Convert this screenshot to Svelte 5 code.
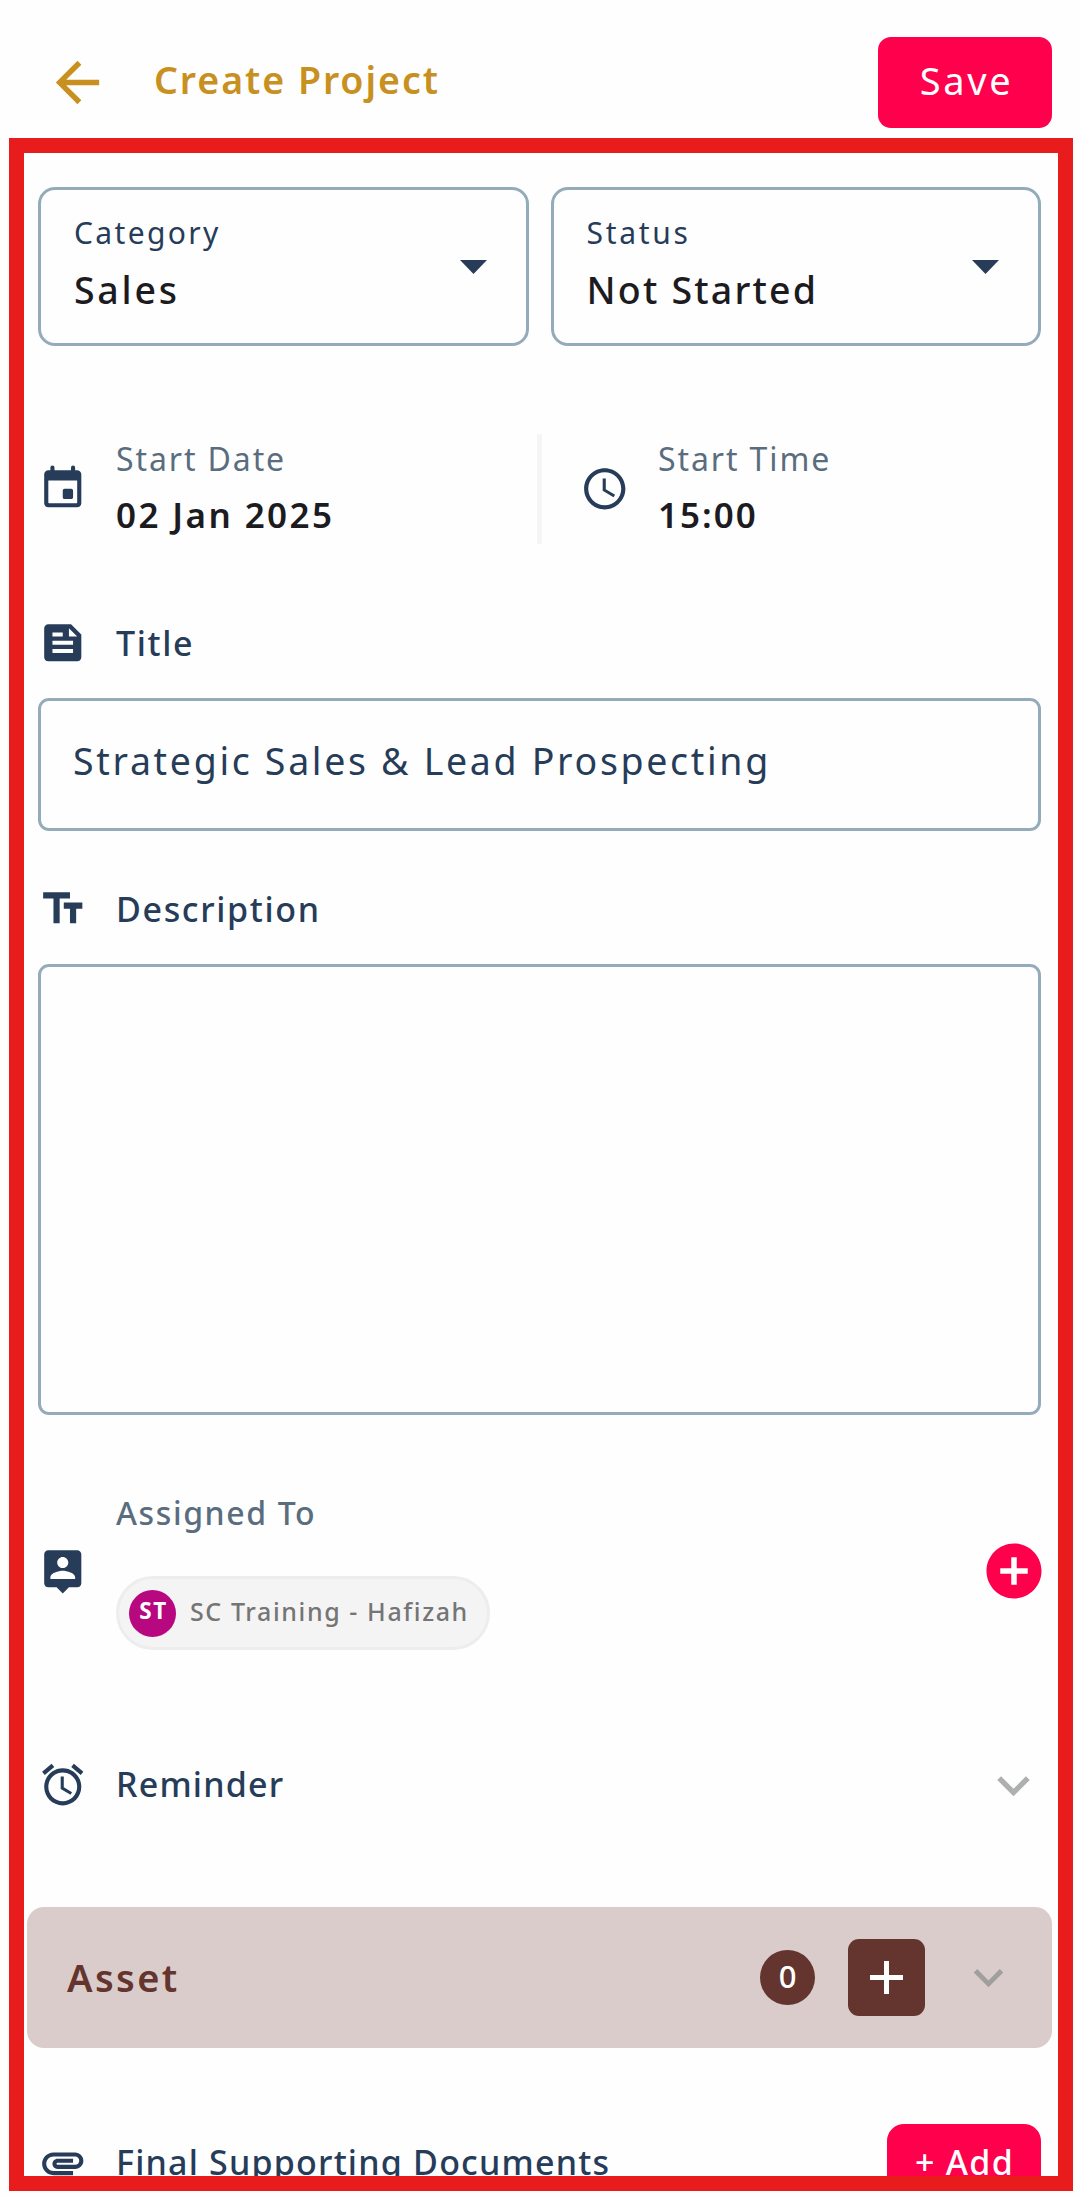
<script>
  const paths = {
    back: 'M20 11H7.83l5.59-5.59L12 4l-8 8 8 8 1.41-1.41L7.83 13H20z',
    event: 'M18.9 3H18V1.7a.9.9 0 0 0-2 0V3H8V1.7a.9.9 0 0 0-2 0V3h-.9C3.9 3 3 3.9 3 5v14c0 1.1.9 2 2.1 2h13.8c1.2 0 2.1-.9 2.1-2V5c0-1.1-.9-2-2.1-2zM19 18.5c0 .3-.2.5-.5.5h-13c-.3 0-.5-.2-.5-.5V8h14zM12.9 12h3.2c.5 0 .9.4.9.9v3.2c0 .5-.4.9-.9.9h-3.2a.9.9 0 0 1-.9-.9v-3.2c0-.5.4-.9.9-.9z',
    clock: 'M11.99 2C6.47 2 2 6.48 2 12s4.47 10 9.99 10C17.52 22 22 17.52 22 12S17.52 2 11.99 2zM12 20c-4.42 0-8-3.58-8-8s3.58-8 8-8 8 3.58 8 8-3.58 8-8 8zM12.5 7H11v6l5.25 3.15.75-1.23-4.5-2.67z',
    feed: 'M16 3H5c-1.1 0-2 .9-2 2v14c0 1.1.9 2 2 2h14c1.1 0 2-.9 2-2V8zM7 7h5v2H7zM17 17H7v-2h10zM17 13H7v-2h10zM15 9V5l4 4z',
    letters: 'M2.5 4v3h5v12h3V7h5V4zM21.5 9h-9v3h3v7h3v-7h3z',
    person: 'M19 2H5c-1.11 0-2 .9-2 2v14c0 1.1.89 2 2 2h4l3 3 3-3h4c1.1 0 2-.9 2-2V4c0-1.1-.9-2-2-2zM12 5.3c1.49 0 2.7 1.21 2.7 2.7s-1.21 2.7-2.7 2.7S9.3 9.49 9.3 8s1.21-2.7 2.7-2.7zM18 16H6v-.9c0-2 4-3.1 6-3.1s6 1.1 6 3.1z',
    alarm: 'M22 5.72l-4.6-3.86-1.29 1.53 4.6 3.86zM7.88 3.39L6.6 1.86 2 5.71l1.29 1.53zM12.5 8H11v6l4.75 2.85.75-1.23-4-2.37zM12 4c-4.97 0-9 4.03-9 9s4.02 9 9 9 9-4.03 9-9-4.03-9-9-9zM12 20c-3.87 0-7-3.13-7-7s3.13-7 7-7 7 3.13 7 7-3.13 7-7 7z',
    clip: 'M2 12.5C2 9.46 4.46 7 7.5 7H18c2.21 0 4 1.79 4 4s-1.79 4-4 4H9.5C8.12 15 7 13.88 7 12.5S8.12 10 9.5 10H17v2H9.41c-.55 0-.55 1 0 1H18c1.1 0 2-.9 2-2s-.9-2-2-2H7.5C5.57 9 4 10.57 4 12.5S5.57 16 7.5 16H17v2H7.5C4.46 18 2 15.54 2 12.5z',
    plusCircle: 'M12 2C6.48 2 2 6.48 2 12s4.48 10 10 10 10-4.48 10-10S17.52 2 12 2zM17 13h-4v4h-2v-4H7v-2h4V7h2v4h4z',
    chevron: 'M16.59 8.59L12 13.17 7.41 8.59 6 10l6 6 6-6z',
  };
  const selects = [
    { label: 'Category', value: 'Sales', kind: 'category' },
    { label: 'Status', value: 'Not Started', kind: 'status' },
  ];
</script>

{#snippet icon(name, kind)}
  <svg class="icon {kind}" viewBox="0 0 24 24" aria-hidden="true"><path fill-rule="evenodd" d={paths[name]} /></svg>
{/snippet}

<div class="screen">
  <header>
    {@render icon('back', 'back')}
    <h1>Create Project</h1>
    <button class="save">Save</button>
  </header>

  <main>
    <section class="selects">
      {#each selects as s}
        <div class="select {s.kind}">
          <div class="select-text">
            <span class="select-label">{s.label}</span>
            <span class="select-value">{s.value}</span>
          </div>
          <svg class="caret" viewBox="0 0 27 14" aria-hidden="true"><path d="M0 0h27L13.5 14z" /></svg>
        </div>
      {/each}
    </section>

    <section class="dates">
      {@render icon('event', 'field')}
      <div class="pair date">
        <span class="muted">Start Date</span>
        <span class="strong">02 Jan 2025</span>
      </div>
      <div class="divider"></div>
      {@render icon('clock', 'field')}
      <div class="pair">
        <span class="muted">Start Time</span>
        <span class="strong time">15:00</span>
      </div>
    </section>

    <div class="heading title">
      {@render icon('feed', 'field')}
      <span>Title</span>
    </div>
    <div class="input">Strategic Sales &amp; Lead Prospecting</div>

    <div class="heading desc">
      {@render icon('letters', 'field')}
      <span>Description</span>
    </div>
    <div class="area"></div>

    <section class="assigned">
      {@render icon('person', 'field')}
      <div class="people">
        <span class="muted assigned-label">Assigned To</span>
        <div class="chip">
          <span class="avatar">ST</span>
          <span class="name">SC Training - Hafizah</span>
        </div>
      </div>
      {@render icon('plusCircle', 'add-person')}
    </section>

    <div class="heading reminder">
      {@render icon('alarm', 'field')}
      <span>Reminder</span>
      {@render icon('chevron', 'expand')}
    </div>

    <section class="asset">
      <span class="asset-name">Asset</span>
      <span class="count">0</span>
      <button class="asset-add" aria-label="Add asset">
        <svg viewBox="0 0 33 33" aria-hidden="true"><path d="M14 0h5v14h14v5H19v14h-5V19H0v-5h14z" /></svg>
      </button>
      {@render icon('chevron', 'asset-expand')}
    </section>

    <div class="heading docs">
      {@render icon('clip', 'field')}
      <span>Final Supporting Documents</span>
      <button class="add">+ Add</button>
    </div>
  </main>
</div>

<style>
  :global(body) { margin: 0; background: #fefefe; }
  .screen {
    box-sizing: border-box;
    width: 1080px;
    height: 2198px;
    overflow: hidden;
    background: #fefefe;
    color: #263c58;
    font-family: "Noto Sans", "Open Sans", sans-serif;
    white-space: nowrap;
  }
  .screen * { box-sizing: border-box; }
  button { border: 0; margin: 0; padding: 0; font-family: inherit; color: #fff; background: #ff004d; }
  .icon { display: block; flex: none; fill: #263c58; }

  header { display: flex; align-items: center; height: 138px; padding: 26px 28px 0 45px; }
  .back { width: 65px; height: 65px; fill: #c8901f; }
  h1 { margin: 0 0 5px 44px; font-size: 37.5px; font-weight: 600; letter-spacing: 1.95px; line-height: 50px; color: #c8901f; }
  .save { width: 174px; height: 91px; margin-left: auto; padding: 0 0 4px 3px; border-radius: 13px; font-size: 38px; letter-spacing: 2.7px; }

  main {
    width: 1064px;
    height: 2053px;
    margin-left: 9px;
    padding: 34px 17px 0 14px;
    border: 15px solid #e81c1c;
    overflow: hidden;
  }

  .selects { display: grid; grid-template-columns: 1fr 1fr; gap: 22px; height: 159px; }
  .select { display: flex; justify-content: space-between; border: 3px solid #94abba; border-radius: 17px; padding: 0 39px 0 33px; }
  .select-text { display: flex; flex-direction: column; padding-top: 21px; }
  .select-label { font-size: 30px; line-height: 44px; letter-spacing: 2.35px; }
  .select-value { margin-top: 8px; font-size: 37.5px; font-weight: 500; line-height: 54px; letter-spacing: 2.75px; color: #1c1b1f; }
  .status .select-label { letter-spacing: 2.7px; }
  .status .select-value { letter-spacing: 2.2px; }
  .caret { width: 27px; height: 14px; margin-top: 70px; fill: #263c58; }

  .field { width: 49.5px; height: 49.5px; margin-right: 28.5px; }

  .dates { display: flex; align-items: center; height: 110px; margin-top: 88px; }
  .pair { display: flex; flex-direction: column; height: 100%; }
  .date { width: 421px; }
  .muted { font-size: 32px; line-height: 49px; letter-spacing: 1.9px; color: #5a6d7f; }
  .strong { padding-top: 1px; font-size: 35px; font-weight: 600; line-height: 62px; letter-spacing: 2.4px; color: #1c1b1f; }
  .time { letter-spacing: 2px; }
  .divider { width: 5px; height: 100%; margin-right: 38px; background: #f5f5f5; }

  .heading { display: flex; align-items: center; height: 50px; font-size: 34px; font-weight: 500; }
  .heading span { padding-bottom: 1px; line-height: 48px; letter-spacing: 1.65px; }
  .title { margin-top: 74px; }
  .input {
    height: 133px;
    margin-top: 30px;
    padding-left: 32px;
    border: 3px solid #94abba;
    border-radius: 11px;
    font-size: 37.5px;
    line-height: 120px;
    letter-spacing: 2.68px;
  }
  .desc { margin-top: 53px; }
  .area { height: 451px; margin-top: 30px; border: 3px solid #94abba; border-radius: 11px; }

  .assigned { display: flex; align-items: center; height: 158px; margin-top: 77px; }
  .people { display: flex; flex-direction: column; align-items: flex-start; justify-content: space-between; height: 100%; }
  .assigned-label { font-weight: 500; line-height: 41px; letter-spacing: 1.61px; }
  .chip { display: flex; align-items: center; width: 374px; height: 74px; padding-left: 10px; border: 3px solid #ededed; border-radius: 38px; background: #f4f4f4; }
  .avatar { width: 47px; height: 47px; border-radius: 50%; background: #b7087f; color: #fff; font-size: 22.5px; font-weight: 700; line-height: 42px; letter-spacing: 1.5px; text-align: center; padding-left: 2px; }
  .name { margin: 0 0 4px 14px; font-size: 25px; font-weight: 500; line-height: 34px; letter-spacing: 1.6px; color: #757575; }
  .add-person { width: 66px; height: 66px; margin: 0 -5.5px 0 auto; fill: #ff004d; }

  .reminder { margin-top: 110px; }
  .reminder span { padding-bottom: 3px; letter-spacing: 1.2px; }
  .expand { width: 65px; height: 65px; margin: 0 -5px 0 auto; fill: #aeb0af; }

  .asset { display: flex; align-items: center; height: 141px; margin: 97px -11px 0; padding: 0 34px 0 40px; border-radius: 17px; background: #dacccb; }
  .asset-name { font-size: 38px; font-weight: 600; line-height: 50px; letter-spacing: 2.4px; padding-bottom: 2px; color: #64342e; }
  .count { width: 55px; height: 55px; margin-left: auto; border-radius: 50%; background: #64342e; color: #fff; font-size: 31px; font-weight: 500; line-height: 53px; text-align: center; }
  .asset-add { display: flex; align-items: center; justify-content: center; width: 77px; height: 77px; margin-left: 33px; border-radius: 11px; background: #64342e; }
  .asset-add svg { width: 33px; height: 33px; fill: #fff; }
  .asset-expand { width: 59px; height: 59px; margin-left: 34px; fill: #9f9f9d; }

  .docs { height: 77px; margin-top: 76px; }
  .docs span { letter-spacing: 1.2px; }
  .add { width: 154px; height: 77px; margin-left: auto; padding: 0 0 2px 1px; border-radius: 17px; font-size: 34px; font-weight: 500; letter-spacing: 1.3px; }
</style>
